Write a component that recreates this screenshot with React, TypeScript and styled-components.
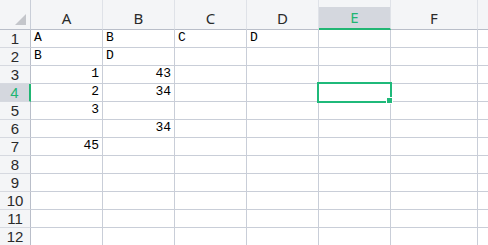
import React from "react";
import styled, { createGlobalStyle } from "styled-components";

const GlobalStyle = createGlobalStyle`
  html, body {
    margin: 0;
    padding: 0;
    background: #ffffff;
    overflow: hidden;
  }
`;

const columns = ["A", "B", "C", "D", "E", "F", ""];
const colWidths = [72, 72, 72, 72, 72, 87, 40];

// cell values by row (1-based) and column index
const data: Record<number, Record<number, { v: string; num?: boolean }>> = {
  1: { 0: { v: "A" }, 1: { v: "B" }, 2: { v: "C" }, 3: { v: "D" } },
  2: { 0: { v: "B" }, 1: { v: "D" } },
  3: { 0: { v: "1", num: true }, 1: { v: "43", num: true } },
  4: { 0: { v: "2", num: true }, 1: { v: "34", num: true } },
  5: { 0: { v: "3", num: true } },
  6: { 1: { v: "34", num: true } },
  7: { 0: { v: "45", num: true } },
};

const activeRow = 4;
const activeCol = 4;

const Sheet = styled.div`
  display: grid;
  grid-template-columns: 31px ${colWidths.map((w) => `${w}px`).join(" ")};
  grid-template-rows: 30px repeat(12, 18px);
  width: 488px;
  height: 245px;
  overflow: hidden;
  background: #ffffff;
`;

const Corner = styled.div`
  position: relative;
  background: #f4f5f7;
  border-right: 1px solid #c9ced8;
  border-bottom: 1px solid #b9bec9;
  &::after {
    content: "";
    position: absolute;
    right: 4px;
    bottom: 4px;
    width: 0;
    height: 0;
    border-left: 11px solid transparent;
    border-bottom: 11px solid #c4c6cb;
  }
`;

const ColHeader = styled.div<{ $active?: boolean }>`
  display: flex;
  align-items: center;
  justify-content: center;
  padding-top: 6px;
  box-sizing: border-box;
  font-family: "Noto Sans", "Open Sans", sans-serif;
  font-size: 15px;
  color: ${(p) => (p.$active ? "#21b573" : "#2a2a2a")};
  background: ${(p) =>
    p.$active
      ? "linear-gradient(#f4f5f7 0, #f4f5f7 7px, #d4d7de 7px)"
      : "#f4f5f7"};
  border-right: 1px solid #dfe2e8;
  border-bottom: ${(p) => (p.$active ? "2px solid #21b573" : "1px solid #b9bec9")};
`;

const RowHeader = styled.div<{ $active?: boolean }>`
  display: flex;
  align-items: center;
  justify-content: center;
  font-family: "Liberation Sans", Arial, sans-serif;
  font-size: 15px;
  line-height: 17px;
  color: ${(p) => (p.$active ? "#21b573" : "#2a2a2a")};
  background: ${(p) => (p.$active ? "#d4d7de" : "#f4f5f7")};
  border-right: ${(p) => (p.$active ? "2px solid #21b573" : "1px solid #b9bec9")};
  border-bottom: 1px solid #d6d9e0;
  box-sizing: border-box;
`;

const Cell = styled.div<{ $num?: boolean }>`
  position: relative;
  display: flex;
  align-items: flex-end;
  justify-content: ${(p) => (p.$num ? "flex-end" : "flex-start")};
  padding: 0 3px 1px 3px;
  box-sizing: border-box;
  font-family: "Liberation Mono", "DejaVu Sans Mono", monospace;
  font-size: 13px;
  line-height: 16px;
  color: #000000;
  border-right: 1px solid #c9ced8;
  border-bottom: 1px solid #c9ced8;
  white-space: nowrap;
`;

const Selection = styled.div`
  position: absolute;
  left: -2px;
  top: -2px;
  right: -2px;
  bottom: -2px;
  border: 2px solid #1fb97a;
  pointer-events: none;
  z-index: 2;
  &::after {
    content: "";
    position: absolute;
    right: -3px;
    bottom: -3px;
    width: 5px;
    height: 5px;
    background: #1fb97a;
    border: 1px solid #ffffff;
  }
`;

export default function App() {
  const rows = Array.from({ length: 12 }, (_, i) => i + 1);
  return (
    <>
      <GlobalStyle />
      <Sheet>
        <Corner />
        {columns.map((c, i) => (
          <ColHeader key={`h${i}`} $active={i === activeCol}>
            {c}
          </ColHeader>
        ))}
        {rows.map((r) => (
          <React.Fragment key={r}>
            <RowHeader $active={r === activeRow}>{r}</RowHeader>
            {columns.map((_, ci) => {
              const cell = data[r]?.[ci];
              return (
                <Cell key={ci} $num={cell?.num}>
                  {cell?.v}
                  {r === activeRow && ci === activeCol && <Selection />}
                </Cell>
              );
            })}
          </React.Fragment>
        ))}
      </Sheet>
    </>
  );
}
